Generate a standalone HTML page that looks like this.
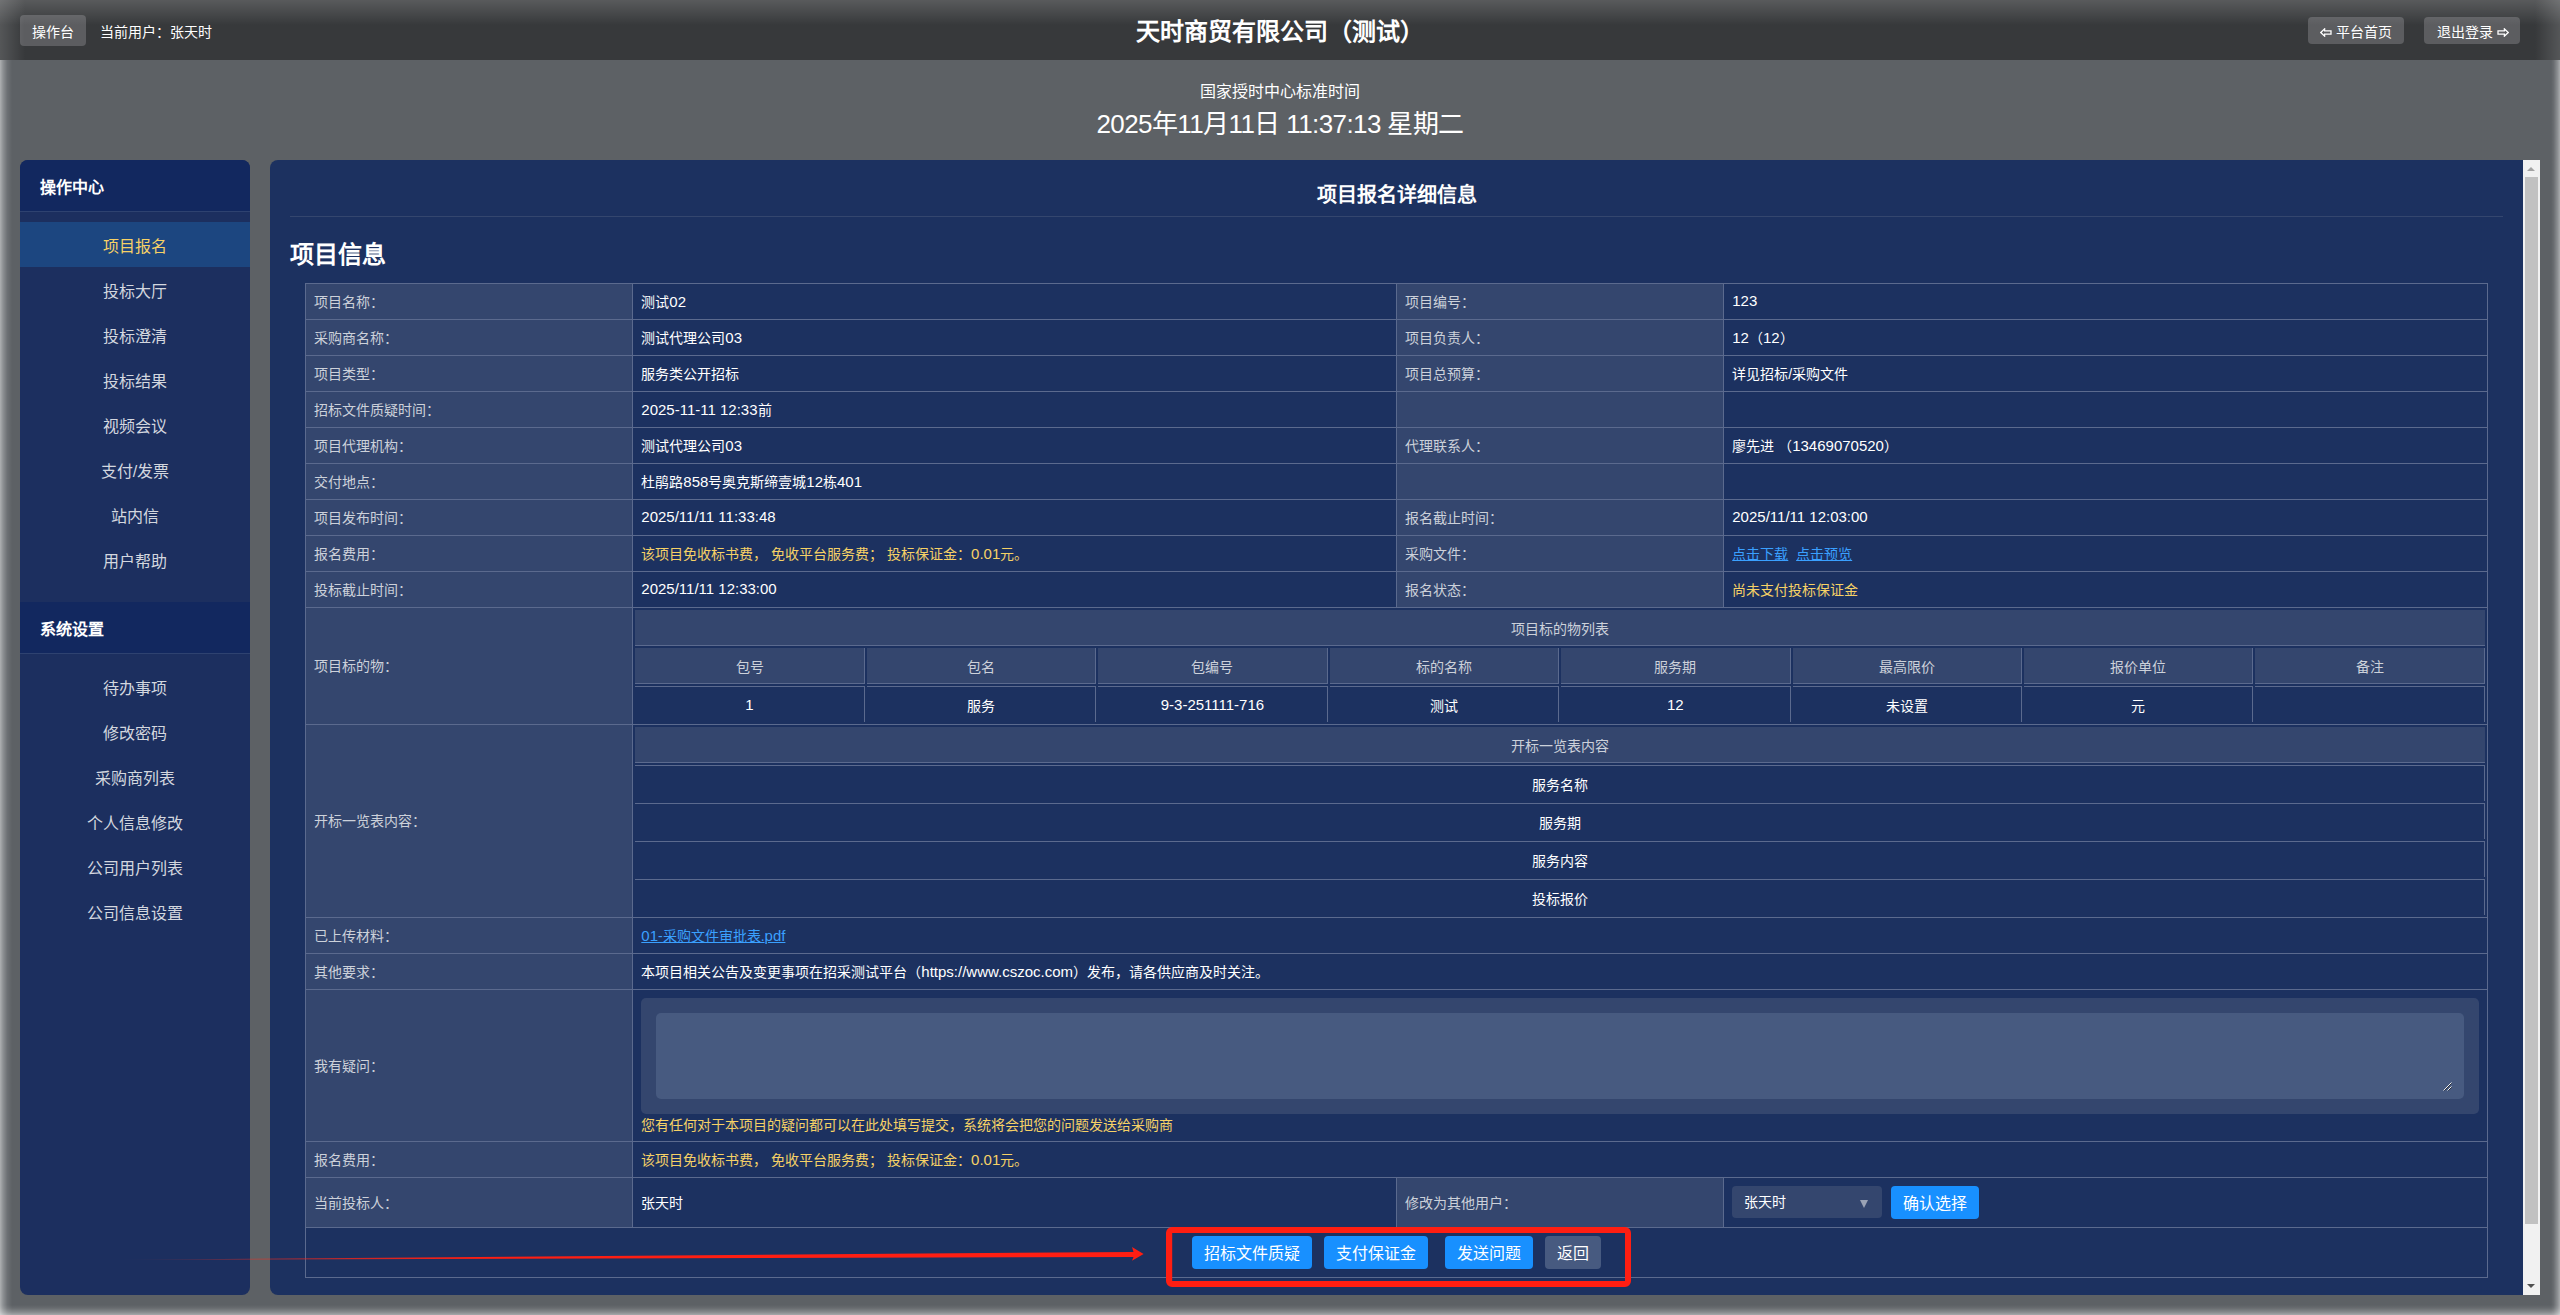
<!DOCTYPE html>
<html lang="zh-CN"><head><meta charset="utf-8">
<style>
*{box-sizing:border-box;margin:0;padding:0}
html,body{width:2560px;height:1315px;overflow:hidden}
body{position:relative;background:#5d6165;font-family:"Liberation Sans",sans-serif;font-size:14px;color:#fff}
.abs{position:absolute}
#hdr{left:0;top:0;width:2560px;height:60px;background:#37393b}
.hbtn{position:absolute;top:15px;height:31px;background:#5c5d60;border-radius:4px;color:#fff;font-size:14px;line-height:34px;text-align:center}
#side{left:20px;top:160px;width:230px;height:1135px;background:#1c2f5f;border-radius:8px;overflow:hidden}
.sh{position:absolute;left:0;width:230px;height:52px;background:#12285f;border-bottom:1px solid #2e4270;color:#fff;font-weight:900;font-size:16px;line-height:56px;padding-left:20px}
.si{position:absolute;left:0;width:230px;height:45px;line-height:50px;text-align:center;font-size:16px;color:#d3d7df}
.si.on{background:#1c4680;color:#f6d166}
#main{left:270px;top:160px;width:2270px;height:1135px;background:#1c3160;border-radius:8px 0 0 8px;overflow:hidden}
#sb{position:absolute;left:2253px;top:0;width:17px;height:1135px;background:#f1f1f1}
#t{border-collapse:collapse;table-layout:fixed}
#t>tbody>tr{height:36px}
#t>tbody>tr>td{border:1px solid #5b6a8e;padding:0 8px 2px 8px;color:#fff;font-size:14px;vertical-align:middle;white-space:nowrap}
#t>tbody>tr>td.l{background:#34466e;color:#ccd1da}
#t td.y,.y{color:#f6d166}
#t a{color:#3aa0ff;text-decoration:underline}
#t>tbody>tr>td.nest{padding:0;vertical-align:top}
table.in{border-collapse:separate;border-spacing:2px;width:100%;table-layout:fixed}
table.in td{height:36px;text-align:center;font-size:14px;padding:0}
table.in td.cap{background:#34466e;color:#ccd1da;border-bottom:1px solid #5b6a8e}
table.in tr.th td{background:#34466e;color:#ccd1da;border-bottom:1px solid #5b6a8e;border-right:1px solid #5b6a8e}
table.in tr.td td{color:#fff;border-top:1px solid #5b6a8e;border-right:1px solid #5b6a8e}
#t>tbody>tr>td.qa{padding:8px 8px 0 8px;vertical-align:top}
.wrap{background:#34466e;border-radius:5px;padding:15px;height:116px}
.ta{background:#475a80;border-radius:5px;height:86px;position:relative}
.grip{position:absolute;right:12px;bottom:8px}
.sel{position:absolute;left:8px;top:8px;width:150px;height:32px;background:#34466e;border-radius:4px;line-height:32px;padding-left:12px;color:#fff}
.arr{position:absolute;left:128px;top:14px;width:0;height:0;border-left:4.5px solid transparent;border-right:4.5px solid transparent;border-top:8px solid #9aa3b5}
.btn{height:33px;line-height:35px;text-align:center;background:#1890ff;border-radius:4px;color:#fff;font-size:16px}
.btn.g{background:#475a80}
#sb .thumb{position:absolute;left:2px;top:17px;width:13px;height:1047px;background:#c1c1c1}
#sb .up{position:absolute;left:4px;top:7px;width:0;height:0;border-left:4.5px solid transparent;border-right:4.5px solid transparent;border-bottom:4px solid #a3a3a3}
#sb .dn{position:absolute;left:4px;top:1124px;width:0;height:0;border-left:4.5px solid transparent;border-right:4.5px solid transparent;border-top:4px solid #505050}
.vg{position:absolute;pointer-events:none}
.n{font-size:15px}
</style></head><body>
<div id="hdr" class="abs">
  <div class="hbtn" style="left:20px;width:66px">操作台</div>
  <div class="abs" style="left:100px;top:15px;line-height:34px;color:#fff">当前用户：张天时</div>
  <div class="abs" style="left:0;width:2560px;top:15px;line-height:34px;text-align:center;font-size:24px;font-weight:900">天时商贸有限公司（测试）</div>
  <div class="hbtn" style="left:2308px;top:17px;width:96px;height:27px;line-height:30px;padding-left:15px"><svg width="12" height="9" viewBox="0 0 12 9" style="position:absolute;left:11.5px;top:11px"><path d="M0.8 4.5 L4.6 0.9 L4.6 2.8 L11 2.8 L11 6.2 L4.6 6.2 L4.6 8.1 Z" fill="none" stroke="#fff" stroke-width="1.3" stroke-linejoin="miter"/></svg>平台首页</div>
  <div class="hbtn" style="left:2424px;top:17px;width:96px;height:27px;line-height:30px;padding-right:15px">退出登录<svg width="12" height="9" viewBox="0 0 12 9" style="position:absolute;left:72.5px;top:11px"><path d="M11.2 4.5 L7.4 0.9 L7.4 2.8 L1 2.8 L1 6.2 L7.4 6.2 L7.4 8.1 Z" fill="none" stroke="#fff" stroke-width="1.3" stroke-linejoin="miter"/></svg></div>
</div>
<div class="abs" style="left:0;width:2560px;top:82px;line-height:20px;text-align:center;font-size:16px">国家授时中心标准时间</div>
<div class="abs" style="left:0;width:2560px;top:108px;line-height:32px;text-align:center;font-size:26px;letter-spacing:-0.6px">2025年11月11日 11:37:13 星期二</div>
<div id="side" class="abs">
<div class="sh" style="top:0">操作中心</div>
<div class="si on" style="top:62px"><span>项目报名</span></div>
<div class="si" style="top:107px"><span>投标大厅</span></div>
<div class="si" style="top:152px"><span>投标澄清</span></div>
<div class="si" style="top:197px"><span>投标结果</span></div>
<div class="si" style="top:242px"><span>视频会议</span></div>
<div class="si" style="top:287px"><span>支付/发票</span></div>
<div class="si" style="top:332px"><span>站内信</span></div>
<div class="si" style="top:377px"><span>用户帮助</span></div>
<div class="sh" style="top:442px">系统设置</div>
<div class="si" style="top:504px"><span>待办事项</span></div>
<div class="si" style="top:549px"><span>修改密码</span></div>
<div class="si" style="top:594px"><span>采购商列表</span></div>
<div class="si" style="top:639px"><span>个人信息修改</span></div>
<div class="si" style="top:684px"><span>公司用户列表</span></div>
<div class="si" style="top:729px"><span>公司信息设置</span></div>
</div>
<div id="main" class="abs">
  <div class="abs" style="left:20px;top:21px;width:2213px;line-height:28px;text-align:center;font-size:20px;font-weight:900">项目报名详细信息</div>
  <div class="abs" style="left:20px;top:56px;width:2213px;height:1px;background:#34466e"></div>
  <div class="abs" style="left:20px;top:79px;line-height:32px;font-size:24px;font-weight:900">项目信息</div>
  <table id="t" class="abs" style="left:35px;top:123px;width:2183px">
   <colgroup><col style="width:15%"><col style="width:35%"><col style="width:15%"><col style="width:35%"></colgroup>
   <tr><td class="l">项目名称：</td><td>测试<span class="n">02</span></td><td class="l">项目编号：</td><td><span class="n">123</span></td></tr>
   <tr><td class="l">采购商名称：</td><td>测试代理公司<span class="n">03</span></td><td class="l">项目负责人：</td><td><span class="n">12</span>（<span class="n">12</span>）</td></tr>
   <tr><td class="l">项目类型：</td><td>服务类公开招标</td><td class="l">项目总预算：</td><td>详见招标/采购文件</td></tr>
   <tr><td class="l">招标文件质疑时间：</td><td><span class="n">2025-11-11 12:33</span>前</td><td class="l"></td><td></td></tr>
   <tr><td class="l">项目代理机构：</td><td>测试代理公司<span class="n">03</span></td><td class="l">代理联系人：</td><td>廖先进 （<span class="n">13469070520</span>）</td></tr>
   <tr><td class="l">交付地点：</td><td>杜鹃路<span class="n">858</span>号奥克斯缔壹城<span class="n">12</span>栋<span class="n">401</span></td><td class="l"></td><td></td></tr>
   <tr><td class="l">项目发布时间：</td><td><span class="n">2025/11/11 11:33:48</span></td><td class="l">报名截止时间：</td><td><span class="n">2025/11/11 12:03:00</span></td></tr>
   <tr><td class="l">报名费用：</td><td class="y">该项目免收标书费， 免收平台服务费； 投标保证金：<span class="n">0.01</span>元。</td><td class="l">采购文件：</td><td><a>点击下载</a> <a style="margin-left:4px">点击预览</a></td></tr>
   <tr><td class="l">投标截止时间：</td><td><span class="n">2025/11/11 12:33:00</span></td><td class="l">报名状态：</td><td class="y">尚未支付投标保证金</td></tr>
   <tr style="height:117px"><td class="l">项目标的物：</td><td colspan="3" class="nest">
     <table class="in">
      <tr><td colspan="8" class="cap">项目标的物列表</td></tr>
      <tr class="th"><td>包号</td><td>包名</td><td>包编号</td><td>标的名称</td><td>服务期</td><td>最高限价</td><td>报价单位</td><td>备注</td></tr>
      <tr class="td"><td><span class="n">1</span></td><td>服务</td><td><span class="n">9-3-251111-716</span></td><td>测试</td><td><span class="n">12</span></td><td>未设置</td><td>元</td><td></td></tr>
     </table>
   </td></tr>
   <tr style="height:193px"><td class="l">开标一览表内容：</td><td colspan="3" class="nest">
     <table class="in">
      <tr><td class="cap">开标一览表内容</td></tr>
      <tr class="td"><td>服务名称</td></tr>
      <tr class="td"><td>服务期</td></tr>
      <tr class="td"><td>服务内容</td></tr>
      <tr class="td"><td>投标报价</td></tr>
     </table>
   </td></tr>
   <tr><td class="l">已上传材料：</td><td colspan="3"><a><span class="n">01</span>-采购文件审批表.<span class="n">pdf</span></a></td></tr>
   <tr><td class="l">其他要求：</td><td colspan="3">本项目相关公告及变更事项在招采测试平台（<span class="n">https://www.cszoc.com</span>）发布，请各供应商及时关注。</td></tr>
   <tr style="height:152px"><td class="l">我有疑问：</td><td colspan="3" class="qa">
     <div class="wrap"><div class="ta"><svg class="grip" width="9" height="9" viewBox="0 0 9 9"><path d="M8.5 0.5L0.5 8.5M8.5 4.5L4.5 8.5" stroke="#eee" stroke-width="1"/><path d="M8.5 1.5L1.5 8.5M8.5 5.5L5.5 8.5" stroke="#1a1a1a" stroke-width="0.7"/></svg></div></div>
     <div class="y" style="line-height:23px">您有任何对于本项目的疑问都可以在此处填写提交，系统将会把您的问题发送给采购商</div>
   </td></tr>
   <tr><td class="l">报名费用：</td><td colspan="3" class="y">该项目免收标书费， 免收平台服务费； 投标保证金：<span class="n">0.01</span>元。</td></tr>
   <tr style="height:50px"><td class="l">当前投标人：</td><td>张天时</td><td class="l">修改为其他用户：</td><td style="position:relative"><div class="sel">张天时<span class="arr"></span></div><div class="btn" style="position:absolute;left:167px;top:8px;width:88px">确认选择</div></td></tr>
   <tr style="height:50px"><td colspan="4" style="position:relative">
     <div class="btn" style="position:absolute;left:886px;top:8px;width:120px">招标文件质疑</div>
     <div class="btn" style="position:absolute;left:1018px;top:8px;width:104px">支付保证金</div>
     <div class="btn" style="position:absolute;left:1139px;top:8px;width:88px">发送问题</div>
     <div class="btn g" style="position:absolute;left:1239px;top:8px;width:56px">返回</div>
   </td></tr>
  </table>
  <div id="sb"><div class="thumb"></div><div class="up"></div><div class="dn"></div></div>
</div>
<svg class="vg" style="left:0;top:0" width="2560" height="1315" viewBox="0 0 2560 1315">
  <defs>
    <linearGradient id="ag" x1="0" y1="0" x2="1" y2="0">
      <stop offset="0" stop-color="#ff2a1a" stop-opacity="0"/>
      <stop offset="0.12" stop-color="#ff2a1a" stop-opacity="0.55"/>
      <stop offset="0.35" stop-color="#ff1e12" stop-opacity="1"/>
      <stop offset="1" stop-color="#ff1e12" stop-opacity="1"/>
    </linearGradient>
  </defs>
  <path d="M116 1259.8 L1134 1251.9 L1134 1257.0 Z" fill="url(#ag)"/>
  <path d="M1126 1251.9 L1133.5 1251.9 L1132 1247 L1143.6 1253.9 L1132 1260.7 L1133.5 1256.9 L1126 1257.1 Z" fill="#ff1e12"/>
  <path d="M1172 1227 H1625 A6 6 0 0 1 1631 1233 V1281 A6 6 0 0 1 1625 1287 H1172 A6 6 0 0 1 1166 1281 V1233 A6 6 0 0 1 1172 1227 Z M1172.2 1233 V1281 H1625 V1233 Z" fill="#ff1e12" fill-rule="evenodd"/>
</svg>
<div class="vg" style="left:0;top:0;width:2560px;height:25px;background:linear-gradient(to bottom,rgba(255,255,255,0.17),rgba(255,255,255,0))"></div>
<div class="vg" style="left:0;top:0;width:25px;height:60px;background:linear-gradient(to right,rgba(255,255,255,0.15),rgba(255,255,255,0))"></div>
<div class="vg" style="left:2535px;top:0;width:25px;height:60px;background:linear-gradient(to left,rgba(255,255,255,0.15),rgba(255,255,255,0))"></div>
<div class="vg" style="left:0;top:60px;width:12px;height:1255px;background:linear-gradient(to right,rgba(255,255,255,0.5),rgba(255,255,255,0.3) 25%,rgba(255,255,255,0.1) 60%,rgba(255,255,255,0))"></div>
<div class="vg" style="left:2551px;top:60px;width:9px;height:1255px;background:linear-gradient(to left,rgba(255,255,255,0.47),rgba(255,255,255,0.28) 30%,rgba(255,255,255,0.08) 70%,rgba(255,255,255,0))"></div>
<div class="vg" style="left:0;top:1305px;width:2560px;height:10px;background:linear-gradient(to top,rgba(255,255,255,0.45),rgba(255,255,255,0.25) 30%,rgba(255,255,255,0.07) 70%,rgba(255,255,255,0))"></div>
</body></html>
